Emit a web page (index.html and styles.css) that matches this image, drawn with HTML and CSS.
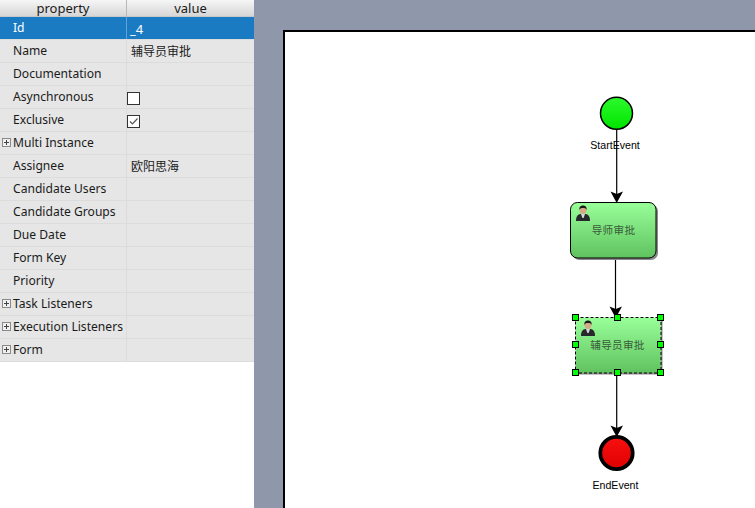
FILE: index.html
```html
<!DOCTYPE html>
<html lang="en">
<head>
<meta charset="utf-8">
<title>Process designer</title>
<link rel="stylesheet" href="styles.css">
</head>
<body>
<div class="app">
  <aside class="panel">
    <div class="head"><div class="hcell">property</div><div class="hcell">value</div></div>
    <div class="row selected"><div class="key">Id</div><div class="val idval">_4</div></div>
    <div class="row"><div class="key">Name</div><div class="val">辅导员审批</div></div>
    <div class="row"><div class="key">Documentation</div><div class="val"></div></div>
    <div class="row"><div class="key">Asynchronous</div><div class="val"><span class="check"></span></div></div>
    <div class="row"><div class="key">Exclusive</div><div class="val"><span class="check"><svg class="tick" viewBox="0 0 11 11"><path d="M2 5.5 L4.5 8 L9.5 2.5"/></svg></span></div></div>
    <div class="row"><div class="key"><span class="plus"></span>Multi Instance</div><div class="val"></div></div>
    <div class="row"><div class="key">Assignee</div><div class="val">欧阳思海</div></div>
    <div class="row"><div class="key">Candidate Users</div><div class="val"></div></div>
    <div class="row"><div class="key">Candidate Groups</div><div class="val"></div></div>
    <div class="row"><div class="key">Due Date</div><div class="val"></div></div>
    <div class="row"><div class="key">Form Key</div><div class="val"></div></div>
    <div class="row"><div class="key">Priority</div><div class="val"></div></div>
    <div class="row"><div class="key"><span class="plus"></span>Task Listeners</div><div class="val"></div></div>
    <div class="row"><div class="key"><span class="plus"></span>Execution Listeners</div><div class="val"></div></div>
    <div class="row"><div class="key"><span class="plus"></span>Form</div><div class="val"></div></div>
  </aside>
  <main class="stage">
    <div class="sheet">
      <svg class="diagram" width="472" height="478" viewBox="283 30 472 478">
        <defs>
          <linearGradient id="taskFill" x1="0" y1="0" x2="0" y2="1">
            <stop offset="0" stop-color="#99ff99"/>
            <stop offset="1" stop-color="#5fc25f"/>
          </linearGradient>
          <linearGradient id="greenFill" x1="0" y1="0" x2="0" y2="1">
            <stop offset="0" stop-color="#2cfa2c"/>
            <stop offset="1" stop-color="#00e400"/>
          </linearGradient>
          <linearGradient id="redFill" x1="0" y1="0" x2="0" y2="1">
            <stop offset="0" stop-color="#f81010"/>
            <stop offset="1" stop-color="#e00000"/>
          </linearGradient>
          <symbol id="person" viewBox="0 0 14 16" overflow="visible">
            <path class="p-suit" d="M0 16 C0 11 2 9.5 4.5 9 L9.5 9 C12 9.5 14 11 14 16 Z"/>
            <path class="p-shirt" d="M5 9 L9 9 L7.6 13 L6.4 13 Z"/>
            <ellipse class="p-face" cx="7" cy="5.2" rx="3.3" ry="3.8"/>
            <path class="p-hair" d="M3.4 5 C3 1.5 5 .5 7 .5 C9 .5 11 1.5 10.6 5 C10 3.2 8.5 3 7 3 C5.5 3 4 3.2 3.4 5 Z"/>
          </symbol>
        </defs>

        <path class="edge" d="M616.7 129 V194"/>
        <path class="head-arrow" d="M610.5 191.5 L616.7 194 L623 191.5 L616.7 203 Z"/>
        <path class="edge" d="M615.5 258 V309"/>
        <path class="head-arrow" d="M609.5 306.5 L615.7 309 L622 306.5 L615.7 318 Z"/>
        <path class="edge" d="M616.7 373 V428"/>
        <path class="head-arrow" d="M610.5 425.5 L616.7 428 L623 425.5 L616.7 437 Z"/>

        <circle class="start" cx="616.5" cy="113.3" r="16"/>
        <text class="label" x="615" y="149">StartEvent</text>

        <rect class="shadow" x="572.5" y="204.5" width="85.5" height="55.5" rx="7"/>
        <rect class="task" x="570.5" y="202.5" width="85.5" height="55.5" rx="7"/>
        <use href="#person" x="576" y="205" width="14" height="16"/>
        <text class="tasklabel" x="613.5" y="234">导师审批</text>

        <rect class="shadow" x="577" y="319" width="85.5" height="55.5"/>
        <rect class="task-selected" x="575.5" y="317.5" width="85.5" height="55.5"/>
        <use href="#person" x="581" y="320" width="14" height="16"/>
        <text class="tasklabel" x="617.5" y="349">辅导员审批</text>
        <rect class="handle" x="572.5" y="314.5" width="6" height="6"/>
        <rect class="handle" x="614.5" y="314.5" width="6" height="6"/>
        <rect class="handle" x="657.5" y="314.5" width="6" height="6"/>
        <rect class="handle" x="572.5" y="341.5" width="6" height="6"/>
        <rect class="handle" x="657.5" y="341.5" width="6" height="6"/>
        <rect class="handle" x="572.5" y="369.5" width="6" height="6"/>
        <rect class="handle" x="614.5" y="369.5" width="6" height="6"/>
        <rect class="handle" x="657.5" y="369.5" width="6" height="6"/>

        <circle class="end" cx="616.5" cy="453" r="16.2"/>
        <text class="label" x="615.5" y="489">EndEvent</text>
      </svg>
    </div>
  </main>
</div>
</body>
</html>
```

FILE: styles.css
```css
* { box-sizing: border-box; }

html, body {
  margin: 0;
  height: 100%;
  overflow: hidden;
  background: #fff;
}

.app {
  display: flex;
  width: 755px;
  height: 508px;
  font-family: "Noto Sans", "Noto Sans CJK SC", sans-serif;
  font-size: 12.1px;
  color: #1a1a1a;
}

.panel {
  width: 254px;
  flex: none;
  background: #fff;
}

.head {
  display: grid;
  grid-template-columns: 127px 1fr;
  height: 17px;
  background: linear-gradient(#f6f6f6, #d6d6d6);
  border-bottom: 1px solid #c8c8c8;
  font-size: 13px;
}

.hcell {
  line-height: 17px;
  text-align: center;
}

.hcell:first-child { border-right: 1px solid #b8b8b8; }

.row {
  display: grid;
  grid-template-columns: 127px 1fr;
  height: 23px;
  background: #e6e6e6;
  border-bottom: 1px solid #dcdcdc;
}

.key {
  display: flex;
  align-items: center;
  padding-left: 13px;
  line-height: 20px;
  border-right: 1px solid #dcdcdc;
  white-space: nowrap;
  position: relative;
}

.val {
  display: flex;
  align-items: center;
  padding-left: 4px;
  padding-bottom: 1px;
  font-size: 12px;
  white-space: nowrap;
}

.selected {
  background: #1a7bc2;
  color: #fff;
}

.selected .key { border-right: 1px solid #5fa3d6; }

.idval {
  font-size: 13px;
  padding-left: 3px;
  padding-top: 3px;
}

.check {
  display: block;
  width: 13px;
  height: 13px;
  margin-left: -4px;
  margin-top: 3px;
  background: #fff;
  border: 1px solid #333;
}

.tick {
  display: block;
  width: 11px;
  height: 11px;
}

.tick path {
  fill: none;
  stroke: #555;
  stroke-width: 1.2;
}

.plus {
  position: absolute;
  left: 2px;
  top: 6px;
  width: 9px;
  height: 9px;
  border: 1px solid #8a8a8a;
  background:
    linear-gradient(#444, #444) center / 5px 1px no-repeat,
    linear-gradient(#444, #444) center / 1px 5px no-repeat,
    #f0f0f0;
}

.stage {
  flex: 1;
  min-width: 0;
  background: #8f97ab;
  padding: 30px 0 0 29px;
}

.sheet {
  height: 100%;
  background: #fff;
  border-left: 2px solid #000;
  border-top: 2px solid #000;
  position: relative;
  overflow: hidden;
}

.diagram {
  position: absolute;
  left: -2px;
  top: -2px;
  display: block;
}

.edge {
  fill: none;
  stroke: #000;
  stroke-width: 1.2;
}

.head-arrow { fill: #000; }

.start {
  fill: url(#greenFill);
  stroke: #000;
  stroke-width: 1.5;
}

.end {
  fill: url(#redFill);
  stroke: #000;
  stroke-width: 3.8;
}

.task {
  fill: url(#taskFill);
  stroke: #000;
  stroke-width: 1;
}

.task-selected {
  fill: url(#taskFill);
  stroke: #000;
  stroke-width: 1;
  stroke-dasharray: 3 2;
}

.shadow { fill: #8a8a8a; }

.handle {
  fill: #00ff00;
  stroke: #000;
  stroke-width: 1;
}

.label {
  font-family: "Liberation Sans", sans-serif;
  font-size: 10.6px;
  text-anchor: middle;
  fill: #000;
}

.tasklabel {
  font-family: "Noto Sans CJK SC", sans-serif;
  font-size: 10.6px;
  letter-spacing: .3px;
  text-anchor: middle;
  fill: #3a5a3a;
}

.p-suit { fill: #26282c; }
.p-shirt { fill: #d8d8d8; }
.p-face { fill: #d8a888; }
.p-hair { fill: #1c1a18; }
```
